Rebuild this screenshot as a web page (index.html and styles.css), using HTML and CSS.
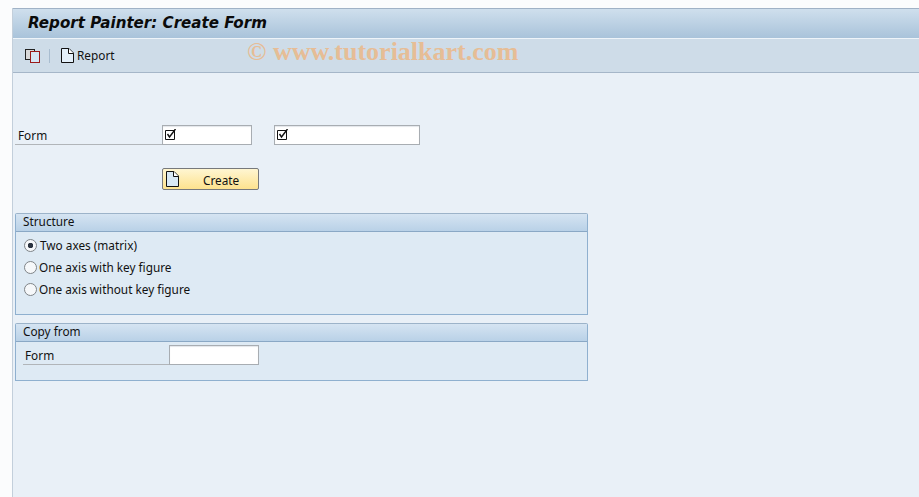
FILE: index.html
```html
<!DOCTYPE html>
<html lang="en">
<head>
    <meta charset="UTF-8">
    <meta name="viewport" content="width=device-width, initial-scale=1.0">
    <title>Report Painter: Create Form</title>
    <link rel="stylesheet" href="styles.css">
</head>
<body>
    <div class="window">
        <div class="title-bar">
            <h1>Report Painter: Create Form</h1>
        </div>
        <div class="tool-bar">
            <svg class="tool-icon" width="15" height="14" viewBox="0 0 15 14">
                <rect x=".5" y=".5" width="9" height="10" fill="#d8d8d8" stroke="#222"/>
                <rect x="5.5" y="2.5" width="9" height="11" fill="#d5e6f5" stroke="#9a1a1a"/>
            </svg>
            <span class="tool-sep"></span>
            <svg class="tool-icon" width="13" height="15" viewBox="0 0 13 15">
                <path d="M.5 .5H8L12.5 5V14.5H.5Z" fill="#e4f0fa" stroke="#111"/>
                <path d="M7.5 .5V5.5H12.5" fill="#fff" stroke="#111"/>
            </svg>
            <span class="tool-label">Report</span>
            <span class="watermark">© www.tutorialkart.com</span>
        </div>
        <div class="content">
            <div class="form-row">
                <label class="field-label">Form</label>
                <div class="input input-short">
                    <svg width="13" height="12" viewBox="0 0 13 12"><path d="M.5 1.5H9.5V10.5H.5Z" fill="none" stroke="#111"/><path d="M2.5 5L4.5 8L10.5 0" fill="none" stroke="#111" stroke-width="1.4"/></svg>
                </div>
                <div class="input input-long">
                    <svg width="13" height="12" viewBox="0 0 13 12"><path d="M.5 1.5H9.5V10.5H.5Z" fill="none" stroke="#111"/><path d="M2.5 5L4.5 8L10.5 0" fill="none" stroke="#111" stroke-width="1.4"/></svg>
                </div>
            </div>
            <button class="create-btn">
                <svg width="13" height="16" viewBox="0 0 13 16">
                    <path d="M.5 .5H8L12.5 5V15.5H.5Z" fill="#d8e8f5" stroke="#111"/>
                    <path d="M7.5 .5V5.5H12.5" fill="#fff" stroke="#111"/>
                </svg>
                <span>Create</span>
            </button>

            <section class="group group-structure">
                <div class="group-head">Structure</div>
                <div class="group-body">
                    <div class="radio-row"><span class="radio checked"></span>Two axes (matrix)</div>
                    <div class="radio-row"><span class="radio"></span>One axis with key figure</div>
                    <div class="radio-row"><span class="radio"></span>One axis without key figure</div>
                </div>
            </section>

            <section class="group group-copy">
                <div class="group-head">Copy from</div>
                <div class="group-body">
                    <div class="copy-row">
                        <label class="copy-label">Form</label>
                        <div class="input input-copy"></div>
                    </div>
                </div>
            </section>
        </div>
    </div>
</body>
</html>
```

FILE: styles.css
```css
body {
    margin: 0;
    height: 497px;
    overflow: hidden;
    background-color: #fbfcfd;
    font-family: "Noto Sans", Arial, sans-serif;
    font-size: 11.8px;
    color: #111;
}

.window {
    margin: 8px 0 0 12px;
    height: 489px;
    background-color: #e9f0f7;
    border-left: 1px solid #c3cfdb;
}

/* Title bar */
.title-bar {
    height: 31px;
    box-sizing: border-box;
    border-top: 1px solid #a0b2c6;
    border-bottom: 1px solid #eef4f9;
    background: linear-gradient(#cfdfed, #a9c3da);
    padding-left: 15px;
}

.title-bar h1 {
    margin: 0;
    font-family: "DejaVu Sans", Arial, sans-serif;
    font-size: 15.1px;
    font-style: italic;
    font-weight: bold;
    line-height: 28px;
    color: #0b0b0b;
}

/* Toolbar */
.tool-bar {
    position: relative;
    display: flex;
    align-items: center;
    height: 34px;
    box-sizing: border-box;
    background-color: #cedce8;
    border-bottom: 1px solid #a5b6c8;
    padding-left: 12px;
}

.tool-icon {
    flex: none;
}

.tool-sep {
    width: 1px;
    height: 14px;
    margin: 0 11px 0 9px;
    background-color: #a9bdd0;
}

.tool-label {
    margin: 0 0 2px 3px;
}

.watermark {
    position: absolute;
    left: 234px;
    top: -1px;
    font-family: "Liberation Serif", serif;
    font-size: 26px;
    font-weight: bold;
    line-height: 27px;
    color: #e6bd96;
    white-space: nowrap;
}

/* Form area */
.content {
    padding: 51px 0 0 2px;
}

.form-row {
    display: flex;
    align-items: flex-end;
    height: 21px;
}

.field-label {
    width: 147px;
    height: 20px;
    box-sizing: border-box;
    padding-left: 3px;
    line-height: 20px;
    border-bottom: 1px solid #b1b5b9;
}

.input {
    box-sizing: border-box;
    height: 20px;
    background-color: #fff;
    border: 1px solid #a8adb2;
    box-shadow: inset 0 1px 1px #e3e6ea;
    padding: 3px 0 0 2px;
}

.input svg {
    display: block;
}

.input-short {
    width: 90px;
    margin-right: 22px;
}

.input-long {
    width: 146px;
}

.input-copy {
    width: 90px;
}

.create-btn {
    display: flex;
    align-items: center;
    width: 97px;
    height: 22px;
    margin: 23px 0 0 147px;
    padding: 0 0 0 3px;
    border: 1px solid #77797c;
    border-radius: 2px;
    background: linear-gradient(#fff6d2, #fde28e);
    font: inherit;
    color: inherit;
}

.create-btn span {
    margin: 1px 0 0 24px;
}

/* Group boxes */
.group {
    width: 573px;
    box-sizing: border-box;
    border: 1px solid #8fb0cf;
    border-top-color: #9cb3c9;
    border-radius: 2px 2px 0 0;
    background-color: #deeaf4;
}

.group-structure {
    height: 102px;
    margin-top: 23px;
}

.group-copy {
    height: 58px;
    margin-top: 8px;
}

.group-head {
    height: 17px;
    padding-left: 7px;
    line-height: 15px;
    background: linear-gradient(#d5e4f2, #b9d1e7);
    border-bottom: 1px solid #8aa8c5;
}

.group-body {
    padding-top: 2px;
}

.radio-row {
    display: flex;
    align-items: center;
    height: 22px;
    padding-left: 8px;
}

.radio {
    width: 13px;
    height: 13px;
    box-sizing: border-box;
    margin-right: 2px;
    border: 1px solid #7f8488;
    border-radius: 50%;
    background-color: #f6f8fa;
}

.radio.checked {
    margin-right: 3px;
    background: radial-gradient(circle, #2b3440 0 2.5px, #f6f8fa 3px);
}

.copy-row {
    display: flex;
    align-items: flex-end;
    height: 20px;
    padding: 1px 0 0 7px;
}

.copy-label {
    width: 146px;
    height: 20px;
    box-sizing: border-box;
    padding-left: 2px;
    line-height: 20px;
    border-bottom: 1px solid #b1b5b9;
}
```
